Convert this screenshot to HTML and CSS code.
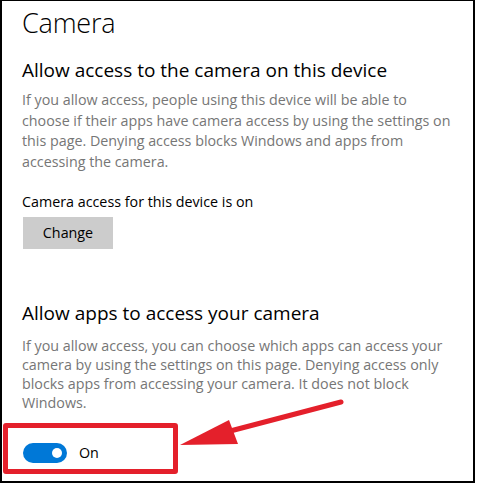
FILE: index.html
```html
<!DOCTYPE html>
<html>
<head>
<meta charset="utf-8">
<link rel="stylesheet" href="styles.css">
</head>
<body>
<div class="frame">
  <h1 class="title">Camera</h1>
  <h2 class="heading">Allow access to the camera on this device</h2>
  <p class="desc">If you allow access, people using this device will be able to choose if their apps have camera access by using the settings on this page. Denying access blocks Windows and apps from accessing the camera.</p>
  <p class="status">Camera access for this device is on</p>
  <button class="btn">Change</button>
  <h2 class="heading heading2">Allow apps to access your camera</h2>
  <p class="desc desc2">If you allow access, you can choose which apps can access your camera by using the settings on this page. Denying access only blocks apps from accessing your camera. It does not block Windows.</p>
  <div class="toggle-row">
    <span class="toggle"><span class="knob"></span></span>
    <span class="toggle-label">On</span>
  </div>
  <div class="highlight"></div>
  <svg class="arrow" width="478" height="483" viewBox="0 0 478 483">
    <line x1="341" y1="402" x2="215" y2="435" stroke="#e4202b" stroke-width="5" stroke-linecap="round"/>
    <polygon points="180,445 229,420 238,444" fill="#e4202b"/>
  </svg>
</div>
</body>
</html>
```
FILE: styles.css
```css
html, body {
  margin: 0;
  padding: 0;
  background: #fff;
}
.frame {
  position: relative;
  box-sizing: border-box;
  width: 475px;
  height: 483px;
  border: 2px solid #000;
  border-top-width: 1px;
  padding: 0 0 0 20px;
  font-family: "Open Sans", "Noto Sans", sans-serif;
  color: #000;
  overflow: hidden;
}
.title {
  margin: 0;
  font-size: 27px;
  font-weight: 300;
  letter-spacing: -0.2px;
  line-height: 40px;
  padding-top: 2px;
}
.heading {
  margin: 13px 0 0 0;
  font-size: 19px;
  font-weight: 400;
  line-height: 28px;
}
.heading2 {
  margin-top: 50px;
}
.desc {
  margin: 6px 0 0 0;
  font-size: 14.3px;
  line-height: 20.7px;
  color: #767676;
  width: 432px;
}
.desc2 {
  margin-top: 9px;
  line-height: 19.2px;
}
.status {
  margin: 19px 0 0 0;
  font-size: 14.3px;
  line-height: 20px;
}
.btn {
  display: block;
  margin: 5px 0 0 1px;
  width: 90px;
  height: 32px;
  border: none;
  background: #cccccc;
  font-family: inherit;
  font-size: 14.3px;
  color: #000;
  padding: 0;
}
.toggle-row {
  display: flex;
  align-items: center;
  gap: 12px;
  margin-top: 30px;
  margin-left: 1px;
}
.toggle {
  position: relative;
  display: block;
  width: 44px;
  height: 20px;
  border-radius: 10px;
  background: #0078d7;
}
.knob {
  position: absolute;
  right: 5px;
  top: 5px;
  width: 10px;
  height: 10px;
  border-radius: 50%;
  background: #fff;
}
.toggle-label {
  font-size: 14.3px;
}
.highlight {
  position: absolute;
  left: 1px;
  top: 422px;
  width: 165px;
  height: 41px;
  border: 5px solid #e4202b;
  border-radius: 3px;
}
.arrow {
  position: absolute;
  left: -2px;
  top: -1px;
}
```
